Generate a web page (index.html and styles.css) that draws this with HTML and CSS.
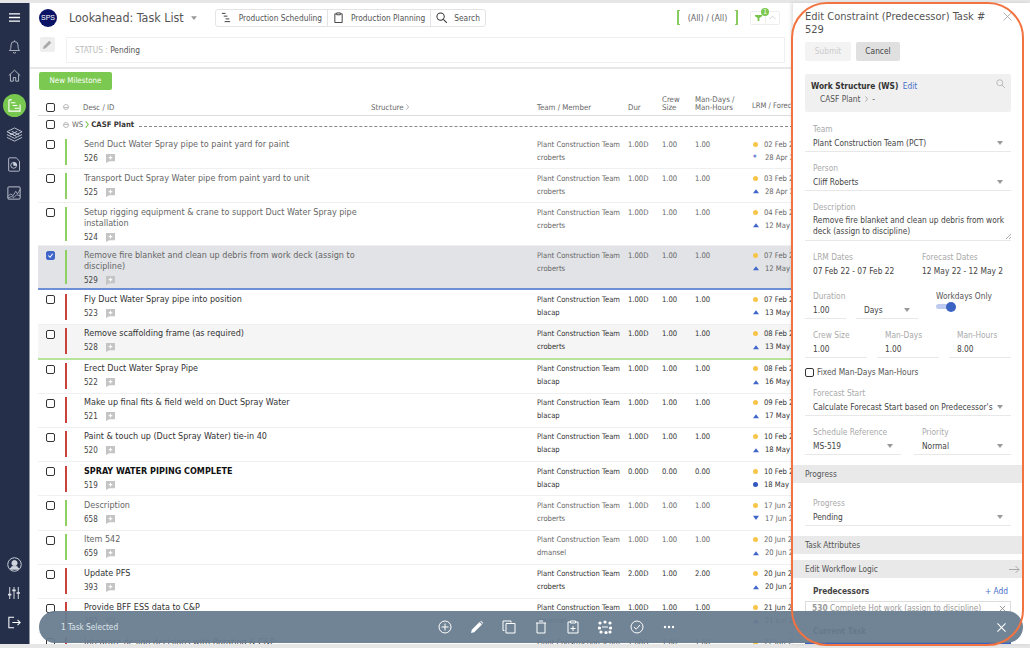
FILE: index.html
```html
<!DOCTYPE html>
<html lang="en">
<head>
  <meta charset="UTF-8">
  <title>Lookahead: Task List</title>
  <link rel="stylesheet" href="styles.css">
</head>
<body>
<svg class="defs" width="0" height="0">
  <symbol id="note" viewBox="0 0 10 10"><path d="M0 0h10v8H3.500L0 10z" fill="#c4c4c4"/><path d="M5 2v4M3 4h4" stroke="#fff" stroke-width="1.200"/></symbol>
  <symbol id="caret" viewBox="0 0 8 5"><path d="M0 0h8L4 5z" fill="#999"/></symbol>
  <symbol id="tri" viewBox="0 0 8 8"><path d="M4 1.500L8 7H0z" fill="#3f66c8"/></symbol>
</svg>
<div class="app">
  <nav class="sidebar">
    <svg class="nav-icon menu" viewBox="0 0 14 12" fill="none" stroke="#fff" stroke-width="1.400"><path d="M1 2h12M1 6h12M1 10h12"/></svg>
    <svg class="nav-icon bell" viewBox="0 0 16 18" fill="none" stroke="#cfd4de"><path d="M8 2a4.500 4.500 0 0 1 4.500 4.500c0 4 .5 5.500 2 7H1.500c1.500-1.500 2-3 2-7A4.500 4.500 0 0 1 8 2zM8 .5V2M6.500 15.500a1.500 1.500 0 0 0 3 0"/></svg>
    <svg class="nav-icon home" viewBox="0 0 16 16" fill="none" stroke="#cfd4de"><path d="M1 8l7-6.500L15 8M3 6.500V15h3.500v-4.500h3V15H13V6.500"/></svg>
    <span class="nav-active"><svg viewBox="0 0 14 14" fill="none" stroke="#fff" stroke-width="1.200"><path d="M1 1h3M1 1v12h12V6M3 4h5M5 7h5M7 10h5"/></svg></span>
    <svg class="nav-icon layers" viewBox="0 0 18 18" fill="none" stroke="#cfd4de" stroke-width=".9"><path d="M9 1l8 4-8 4-8-4zM1 8l8 4 8-4M1 11l8 4 8-4M3 6l8 4M6 4.500l8 4M12 4.500l-8 4"/></svg>
    <svg class="nav-icon doc" viewBox="0 0 16 18" fill="none" stroke="#cfd4de"><path d="M2 1h8l4 4v11a1 1 0 0 1-1 1H2a1 1 0 0 1-1-1V2a1 1 0 0 1 1-1z"/><circle cx="7" cy="10" r="3.500"/><path d="M7 10V6.500A3.500 3.500 0 0 1 10.500 10z" fill="#cfd4de"/></svg>
    <svg class="nav-icon chart" viewBox="0 0 16 16" fill="none" stroke="#cfd4de"><rect x="1" y="1" width="14" height="14" rx="1"/><path d="M1 12l3-3 3 2 3-5 2 3 3-5M1 14l4-2 3 1 3-3 4 1" stroke-width=".8"/></svg>
    <span class="nav-spacer"></span>
    <svg class="nav-icon user" viewBox="0 0 16 16" fill="none" stroke="#cfd4de"><circle cx="8" cy="8" r="7.200"/><circle cx="8" cy="6.500" r="2.800" fill="#cfd4de"/><path d="M3.500 13c.5-2.500 2-3 4.500-3s4 .5 4.500 3z" fill="#cfd4de"/></svg>
    <svg class="nav-icon sliders" viewBox="0 0 14 14" fill="none" stroke="#dfe2e8" stroke-width="1.100"><path d="M2 0v14M7 0v14M12 0v14"/><path d="M0 9h4M5 4h4M10 7h4" stroke-width="2"/></svg>
    <svg class="nav-icon logout" viewBox="0 0 15 14" fill="none" stroke="#fff" stroke-width="1.200"><path d="M7 1H1v12h6M5 7h9M11 4l3 3-3 3"/></svg>
  </nav>

  <main class="main">
    <header class="topbar">
      <span class="logo">SPS</span>
      <h1 class="page-title">Lookahead: Task List</h1>
      <svg class="title-caret"><use href="#caret"/></svg>
      <div class="btn-group">
        <span class="group-btn"><svg viewBox="0 0 12 12" fill="none" stroke="#333"><path d="M1 1.500h4M3 4.500h4M5 7.500h4M4 10.500h6"/></svg>Production Scheduling</span>
        <span class="group-btn"><svg viewBox="0 0 12 12" fill="none" stroke="#333"><path d="M3.500 2H2v9.500h8V2H8.500M4 1h4v2H4z"/></svg>Production Planning</span>
        <span class="group-btn"><svg viewBox="0 0 12 12" fill="none" stroke="#333" stroke-width="1.100"><circle cx="5" cy="5" r="4"/><path d="M8 8l4 4"/></svg>Search</span>
      </div>
      <div class="scope"><i class="bracket"></i>(All) / (All)<i class="bracket end"></i></div>
      <div class="filter">
        <span class="filter-part"><svg viewBox="0 0 8 8"><path d="M0 1h8v1.500L5 4.500V8H3V4.500L0 2.500z" fill="#75c34a"/></svg></span>
        <span class="filter-part"><svg viewBox="0 0 8 5" fill="none" stroke="#ccc"><path d="M.5 4.500L4 1l3.500 3.500"/></svg></span>
        <span class="badge">1</span>
      </div>
    </header>
    <div class="status-row">
      <span class="edit-btn"><svg viewBox="0 0 10 10"><path d="M0 10l.8-3L7 .8 9.200 3 3 9.200z" fill="#a8a8a8"/></svg></span>
      <div class="status-box"><span class="status-key">STATUS :</span> Pending</div>
    </div>
    <div class="action-row"><span class="btn-milestone">New Milestone</span></div>

    <div class="table">
      <div class="row head">
        <span class="check"></span>
        <span class="collapse"></span>
        <span class="desc">Desc / ID</span>
        <span class="structure">Structure <svg viewBox="0 0 4 8" fill="none" stroke="#999"><path d="M.5 .5L3.500 4 .5 7.500"/></svg></span>
        <span class="team">Team / Member</span>
        <span class="dur">Dur</span>
        <span class="crew">Crew<br>Size</span>
        <span class="man">Man-Days /<br>Man-Hours</span>
        <span class="dates">LRM / Forecast</span>
      </div>
      <div class="ws-row">
        <span class="check"></span>
        <span class="collapse"></span>
        <span class="ws-key">WS</span>
        <svg class="ws-arrow" viewBox="0 0 4 8" fill="none" stroke="#75c34a" stroke-width="1.200"><path d="M.5 .5L3.500 4 .5 7.500"/></svg>
        <b class="ws-name">CASF Plant</b>
        <span class="ws-line"></span>
      </div>

      <div class="row task soft">
        <span class="check"></span><span class="bar green"></span>
        <div class="desc"><div>Send Duct Water Spray pipe to paint yard for paint</div><div class="task-id">526 <svg class="note"><use href="#note"/></svg></div></div>
        <div class="team">Plant Construction Team<br>croberts</div><span class="dur">1.00D</span><span class="crew">1.00</span><span class="man">1.00</span>
        <div class="dates"><div><i class="dot"></i>02 Feb 22</div><div class="date-fc"><i class="star">*</i>28 Apr 22</div></div>
      </div>
      <div class="row task soft">
        <span class="check"></span><span class="bar green"></span>
        <div class="desc"><div>Transport Duct Spray Water pipe from paint yard to unit</div><div class="task-id">525 <svg class="note"><use href="#note"/></svg></div></div>
        <div class="team">Plant Construction Team<br>croberts</div><span class="dur">1.00D</span><span class="crew">1.00</span><span class="man">1.00</span>
        <div class="dates"><div><i class="dot"></i>03 Feb 22</div><div><svg class="tri"><use href="#tri"/></svg>28 Apr 22</div></div>
      </div>
      <div class="row task tall soft">
        <span class="check"></span><span class="bar green"></span>
        <div class="desc"><div>Setup rigging equipment &amp; crane to support Duct Water Spray pipe installation</div><div class="task-id">524 <svg class="note"><use href="#note"/></svg></div></div>
        <div class="team">Plant Construction Team<br>croberts</div><span class="dur">1.00D</span><span class="crew">1.00</span><span class="man">1.00</span>
        <div class="dates"><div><i class="dot"></i>04 Feb 22</div><div><svg class="tri"><use href="#tri"/></svg>12 May 22</div></div>
      </div>
      <div class="row task tall soft selected">
        <span class="check checked"><svg viewBox="0 0 8 8" fill="none" stroke="#fff" stroke-width="1.200"><path d="M1.500 4l2 2 3-4"/></svg></span><span class="bar green"></span>
        <div class="desc"><div>Remove fire blanket and clean up debris from work deck (assign to discipline)</div><div class="task-id">529 <svg class="note"><use href="#note"/></svg></div></div>
        <div class="team">Plant Construction Team<br>croberts</div><span class="dur">1.00D</span><span class="crew">1.00</span><span class="man">1.00</span>
        <div class="dates"><div><i class="dot"></i>07 Feb 22</div><div><svg class="tri"><use href="#tri"/></svg>12 May 22</div></div>
      </div>
      <div class="row task">
        <span class="check"></span><span class="bar red"></span>
        <div class="desc"><div>Fly Duct Water Spray pipe into position</div><div class="task-id">523 <svg class="note"><use href="#note"/></svg></div></div>
        <div class="team">Plant Construction Team<br>blacap</div><span class="dur">1.00D</span><span class="crew">1.00</span><span class="man">1.00</span>
        <div class="dates"><div><i class="dot"></i>07 Feb 22</div><div><svg class="tri"><use href="#tri"/></svg>13 May 22</div></div>
      </div>
      <div class="row task shaded">
        <span class="check"></span><span class="bar red"></span>
        <div class="desc"><div>Remove scaffolding frame (as required)</div><div class="task-id">528 <svg class="note"><use href="#note"/></svg></div></div>
        <div class="team">Plant Construction Team<br>croberts</div><span class="dur">1.00D</span><span class="crew">1.00</span><span class="man">1.00</span>
        <div class="dates"><div><i class="dot"></i>08 Feb 22</div><div><svg class="tri"><use href="#tri"/></svg>13 May 22</div></div>
      </div>
      <div class="row task">
        <span class="check"></span><span class="bar red"></span>
        <div class="desc"><div>Erect Duct Water Spray Pipe</div><div class="task-id">522 <svg class="note"><use href="#note"/></svg></div></div>
        <div class="team">Plant Construction Team<br>blacap</div><span class="dur">1.00D</span><span class="crew">1.00</span><span class="man">1.00</span>
        <div class="dates"><div><i class="dot"></i>08 Feb 22</div><div><svg class="tri"><use href="#tri"/></svg>16 May 22</div></div>
      </div>
      <div class="row task">
        <span class="check"></span><span class="bar red"></span>
        <div class="desc"><div>Make up final fits &amp; field weld on Duct Spray Water</div><div class="task-id">521 <svg class="note"><use href="#note"/></svg></div></div>
        <div class="team">Plant Construction Team<br>blacap</div><span class="dur">1.00D</span><span class="crew">1.00</span><span class="man">1.00</span>
        <div class="dates"><div><i class="dot"></i>09 Feb 22</div><div><svg class="tri"><use href="#tri"/></svg>17 May 22</div></div>
      </div>
      <div class="row task">
        <span class="check"></span><span class="bar red"></span>
        <div class="desc"><div>Paint &amp; touch up (Duct Spray Water) tie-in 40</div><div class="task-id">520 <svg class="note"><use href="#note"/></svg></div></div>
        <div class="team">Plant Construction Team<br>blacap</div><span class="dur">1.00D</span><span class="crew">1.00</span><span class="man">1.00</span>
        <div class="dates"><div><i class="dot"></i>10 Feb 22</div><div><svg class="tri"><use href="#tri"/></svg>18 May 22</div></div>
      </div>
      <div class="row task">
        <span class="check"></span><span class="bar red"></span>
        <div class="desc"><div class="milestone">SPRAY WATER PIPING COMPLETE</div><div class="task-id">519 <svg class="note"><use href="#note"/></svg></div></div>
        <div class="team">Plant Construction Team<br>blacap</div><span class="dur">0.00D</span><span class="crew">0.00</span><span class="man">0.00</span>
        <div class="dates"><div><i class="dot"></i>10 Feb 22</div><div><i class="dot blue"></i>18 May 22</div></div>
      </div>
      <div class="row task soft">
        <span class="check"></span><span class="bar green"></span>
        <div class="desc"><div>Description</div><div class="task-id">658 <svg class="note"><use href="#note"/></svg></div></div>
        <div class="team">Plant Construction Team<br>croberts</div><span class="dur">1.00D</span><span class="crew">1.00</span><span class="man">1.00</span>
        <div class="dates"><div><i class="dot"></i>17 Jun 22</div><div><svg class="tri flip"><use href="#tri"/></svg>17 Jun 22</div></div>
      </div>
      <div class="row task soft">
        <span class="check"></span><span class="bar green"></span>
        <div class="desc"><div>Item 542</div><div class="task-id">659 <svg class="note"><use href="#note"/></svg></div></div>
        <div class="team">Plant Construction Team<br>dmansel</div><span class="dur">1.00D</span><span class="crew">1.00</span><span class="man">1.00</span>
        <div class="dates"><div><i class="dot"></i>20 Jun 22</div><div><svg class="tri"><use href="#tri"/></svg>20 Jun 22</div></div>
      </div>
      <div class="row task">
        <span class="check"></span><span class="bar red"></span>
        <div class="desc"><div>Update PFS</div><div class="task-id">393 <svg class="note"><use href="#note"/></svg></div></div>
        <div class="team">Plant Construction Team<br>croberts</div><span class="dur">2.00D</span><span class="crew">1.00</span><span class="man">2.00</span>
        <div class="dates"><div><i class="dot"></i>20 Jun 22</div><div><svg class="tri"><use href="#tri"/></svg>20 Jun 22</div></div>
      </div>
      <div class="row task">
        <span class="check"></span><span class="bar red"></span>
        <div class="desc"><div>Provide BFF ESS data to C&amp;P</div><div class="task-id">392 <svg class="note"><use href="#note"/></svg></div></div>
        <div class="team">Plant Construction Team<br>dmansel</div><span class="dur">1.00D</span><span class="crew">1.00</span><span class="man">1.00</span>
        <div class="dates"><div><i class="dot"></i>21 Jun 22</div><div><svg class="tri"><use href="#tri"/></svg>21 Jun 22</div></div>
      </div>
      <div class="row task">
        <span class="check"></span><span class="bar red"></span>
        <div class="desc"><div>Integrate design decisions with Rotating &amp; C&amp;P</div></div>
        <div class="team">Plant Construction Team</div><span class="dur">1.00D</span><span class="crew">1.00</span><span class="man">1.00</span>
        <div class="dates"><div><i class="dot"></i>22 Jun 22</div></div>
      </div>
    </div>
  </main>

  <aside class="panel">
    <div class="panel-head">
      <h2 class="panel-title">Edit Constraint (Predecessor) Task # 529</h2>
      <svg class="panel-close" viewBox="0 0 10 10" fill="none" stroke="#aaa"><path d="M.5 .5l9 9M9.500 .5l-9 9"/></svg>
    </div>
    <div class="panel-btns">
      <span class="btn submit">Submit</span>
      <span class="btn cancel">Cancel</span>
    </div>
    <div class="ws-box">
      <div><b>Work Structure (WS)</b> <span class="link">Edit</span></div>
      <div class="ws-path">CASF Plant <svg viewBox="0 0 4 8" fill="none" stroke="#999"><path d="M.5 .5L3.500 4 .5 7.500"/></svg> -</div>
      <svg class="ws-search" viewBox="0 0 12 12" fill="none" stroke="#aaa"><circle cx="5" cy="5" r="4"/><path d="M8 8l4 4"/></svg>
    </div>

    <div class="field select"><label>Team</label><div class="value">Plant Construction Team (PCT)</div></div>
    <div class="field select"><label>Person</label><div class="value">Cliff Roberts</div></div>
    <div class="field"><label>Description</label><div class="value multi">Remove fire blanket and clean up debris from work deck (assign to discipline)</div>
      <svg class="grip" viewBox="0 0 5 5" fill="none" stroke="#888" stroke-width=".7"><path d="M0 5l5-5M3 5l2-2"/></svg>
    </div>
    <div class="cols plain">
      <div class="field"><label>LRM Dates</label><div class="value">07 Feb 22 - 07 Feb 22</div></div>
      <div class="field"><label>Forecast Dates</label><div class="value">12 May 22 - 12 May 2</div></div>
    </div>
    <div class="cols duration">
      <div class="field"><label>Duration</label><div class="value">1.00</div></div>
      <div class="field select"><label>&nbsp;</label><div class="value">Days</div></div>
      <div class="workdays"><span>Workdays Only</span><span class="toggle"></span></div>
    </div>
    <div class="cols three">
      <div class="field"><label>Crew Size</label><div class="value">1.00</div></div>
      <div class="field"><label>Man-Days</label><div class="value">1.00</div></div>
      <div class="field"><label>Man-Hours</label><div class="value">8.00</div></div>
    </div>
    <div class="fixed-row"><span class="check"></span>Fixed Man-Days Man-Hours</div>
    <div class="field select"><label>Forecast Start</label><div class="value">Calculate Forecast Start based on Predecessor's</div></div>
    <div class="cols two">
      <div class="field select"><label>Schedule Reference</label><div class="value">MS-519</div></div>
      <div class="field select"><label>Priority</label><div class="value">Normal</div></div>
    </div>

    <div class="section">Progress</div>
    <div class="field select first"><label>Progress</label><div class="value">Pending</div></div>
    <div class="section">Task Attributes</div>
    <div class="section next">Edit Workflow Logic
      <svg viewBox="0 0 11 9" fill="none" stroke="#aaa"><path d="M0 4.500h10M6.500 1L10 4.500 6.500 8"/></svg>
    </div>
    <div class="pred-head"><b>Predecessors</b><span class="link">+ Add</span></div>
    <div class="pred-box"><span><b>530</b> Complete Hot work (assign to discipline)</span><svg viewBox="0 0 8 8" fill="none" stroke="#888"><path d="M1 1l6 6M7 1L1 7"/></svg></div>
    <div class="current"><b>Current Task</b></div>
    <div class="current-btn"></div>
  </aside>

  <div class="selection-bar">
    <span class="selection-text">1 Task Selected</span>
    <div class="selection-actions">
      <svg viewBox="0 0 14 14" fill="none" stroke="#fff"><circle cx="7" cy="7" r="6"/><path d="M7 3.500v7M3.500 7h7"/></svg>
      <svg viewBox="0 0 14 14" fill="#fff"><path d="M1 13l.8-3.200L9.500 2l2.500 2.500-7.800 7.700zM10.300 1.300l.7-.5 2.200 2.200-.5.700z"/></svg>
      <svg viewBox="0 0 14 14" fill="none" stroke="#fff"><path d="M2.500 10.500H1V1h8v1.500M4 3.500h9V13H4z"/></svg>
      <svg viewBox="0 0 14 14" fill="none" stroke="#fff"><path d="M2 3h10M3 3v10h8V3M5 1h4"/></svg>
      <svg viewBox="0 0 14 14" fill="none" stroke="#fff"><path d="M4 2H2v11h10V2h-2M4.500 1h5v2h-5zM7 6v5M4.500 8.500h5"/></svg>
      <svg viewBox="0 0 14 14" fill="#fff"><circle cx="2" cy="3" r="1.600"/><circle cx="7" cy="2" r="1.600"/><circle cx="12" cy="3" r="1.600"/><circle cx="1.500" cy="8" r="1.600"/><circle cx="12.500" cy="8" r="1.600"/><circle cx="3" cy="12" r="1.600"/><circle cx="8" cy="12.500" r="1.600"/><circle cx="12" cy="12" r="1.600"/><path d="M4 6.500h6v1H4z"/></svg>
      <svg viewBox="0 0 14 14" fill="none" stroke="#fff"><circle cx="7" cy="7" r="6"/><path d="M4 7l2.200 2.200L10 5"/></svg>
      <svg viewBox="0 0 14 14" fill="#fff"><circle cx="3" cy="7" r="1.200"/><circle cx="7" cy="7" r="1.200"/><circle cx="11" cy="7" r="1.200"/></svg>
    </div>
    <svg class="selection-close" viewBox="0 0 10 10" fill="none" stroke="#fff" stroke-width="1.200"><path d="M.5 .5l9 9M9.500 .5l-9 9"/></svg>
  </div>
  <div class="callout"></div>
</div>
</body>
</html>
```

FILE: styles.css
```css
* {
  box-sizing: border-box;
}
html, body {
  margin: 0;
  height: 648px;
  overflow: hidden;
}
body {
  padding-top: 3px;
  background: #e6e6e6;
  font-family: "DejaVu Sans", sans-serif;
  font-stretch: condensed;
  font-size: 8.3px;
  color: #444;
}
b {
  font-weight: bold;
}
.defs {
  position: absolute;
}
.app {
  position: relative;
  display: flex;
  height: 641px;
  background: #fff;
}

/* left nav */
.sidebar {
  flex: 0 0 30px;
  display: flex;
  flex-direction: column;
  align-items: center;
  width: 30px;
  padding-top: 9px;
  padding-right: 1px;
  padding-bottom: 15px;
  background: #252f4a;
  border-right: 1px solid #8d97a8;
}
.nav-icon {
  display: block;
  width: 13px;
  height: 13px;
}
.menu {
  height: 11px;
}
.bell {
  margin-top: 17px;
  height: 14px;
}
.home {
  margin-top: 15px;
}
.nav-active {
  display: flex;
  align-items: center;
  justify-content: center;
  width: 23px;
  height: 23px;
  margin-top: 12px;
  border-radius: 50%;
  background: #78c850;
}
.nav-active svg {
  width: 13px;
  height: 13px;
}
.layers {
  width: 17px;
  height: 17px;
  margin-top: 10px;
}
.doc {
  width: 15px;
  height: 15px;
  margin-top: 13px;
}
.chart {
  width: 14px;
  height: 14px;
  margin-top: 14px;
}
.nav-spacer {
  flex: 1;
}
.user {
  width: 15px;
  height: 15px;
}
.sliders {
  width: 12px;
  height: 12px;
  margin-top: 15px;
}
.logout {
  margin-top: 17px;
}

/* main column */
.main {
  flex: 1;
  min-width: 0;
  overflow: hidden;
}
.topbar {
  display: flex;
  align-items: center;
  height: 29px;
  padding: 0 13px 0 9px;
  white-space: nowrap;
}
.logo {
  display: flex;
  align-items: center;
  justify-content: center;
  width: 18px;
  height: 18px;
  border-radius: 50%;
  background: #0b1464;
  color: #fff;
  font-family: "Liberation Sans", sans-serif;
  font-size: 7px;
}
.page-title {
  margin: 0 0 0 12px;
  font-size: 12.4px;
  font-weight: normal;
  color: #555;
}
.title-caret {
  width: 6px;
  height: 4px;
  margin-left: 7px;
}
.btn-group {
  display: flex;
  height: 18px;
  margin-left: 18px;
  border: 1px solid #e4e4e4;
  border-radius: 3px;
}
.group-btn {
  display: flex;
  align-items: center;
  gap: 7px;
  padding: 0 5px;
  color: #555;
  border-left: 1px solid #e4e4e4;
}
.group-btn:first-child {
  border-left: 0;
}
.group-btn svg {
  width: 11px;
  height: 11px;
}
.scope {
  display: flex;
  align-items: center;
  justify-content: space-between;
  width: 61px;
  height: 15px;
  margin-left: auto;
  font-size: 8.8px;
  color: #666;
}
.bracket {
  width: 3px;
  height: 15px;
  border: 1px solid #8acb60;
  border-right: 0;
  border-left-width: 2px;
}
.bracket.end {
  border: 1px solid #8acb60;
  border-left: 0;
  border-right-width: 2px;
}
.filter {
  position: relative;
  display: flex;
  height: 14px;
  margin-left: 12px;
  border: 1px solid #eee;
  border-radius: 2px;
}
.filter-part {
  display: flex;
  align-items: center;
  justify-content: center;
  width: 14px;
}
.filter-part + .filter-part {
  border-left: 1px solid #eee;
}
.filter-part svg {
  width: 7px;
  height: 7px;
}
.badge {
  position: absolute;
  left: 10px;
  top: -4px;
  width: 8px;
  height: 8px;
  border-radius: 50%;
  background: #7cc952;
  color: #fff;
  font-size: 6.5px;
  line-height: 8px;
  text-align: center;
}
.status-row {
  display: flex;
  height: 37px;
  padding: 5px 8px 0 10px;
  border-bottom: 2px solid #e8e8e8;
}
.edit-btn {
  display: flex;
  align-items: center;
  justify-content: center;
  width: 15px;
  height: 15px;
  border-radius: 2px;
  background: #eee;
}
.edit-btn svg {
  width: 9px;
  height: 9px;
}
.status-box {
  flex: 1;
  height: 26px;
  margin-left: 11px;
  padding-left: 8px;
  border: 1px solid #f0f0f0;
  line-height: 25px;
  color: #555;
}
.status-key {
  color: #bbb;
}
.action-row {
  height: 23px;
  padding: 3px 0 0 9px;
}
.btn-milestone {
  display: block;
  width: 73px;
  height: 18px;
  border-radius: 2px;
  background: #7cc952;
  color: #fff;
  font-size: 7.9px;
  line-height: 18px;
  text-align: center;
}

/* task table */
.table {
  margin-left: 8px;
  width: 755px;
}
.row {
  display: grid;
  grid-template-columns: 8px 19px 19px 287px 166px 91px 34px 33px 57px 60px;
  white-space: nowrap;
}
.row > .check {
  grid-column: 2;
}
.row > .bar,
.row > .collapse {
  grid-column: 3;
}
.row > .desc {
  grid-column: 4 / span 2;
}
.row > .structure {
  grid-column: 5;
}
.row > .team {
  grid-column: 6;
}
.row > .dur {
  grid-column: 7;
}
.row > .crew {
  grid-column: 8;
}
.row > .man {
  grid-column: 9;
}
.row > .dates {
  grid-column: 10;
}
.check {
  display: block;
  width: 9px;
  height: 9px;
  border: 1.500px solid #333;
  border-radius: 2px;
  background: #fff;
}
.check.checked {
  display: flex;
  border-color: #3f66c8;
  background: #3f66c8;
}
.head {
  align-items: end;
  height: 24px;
  padding-bottom: 3px;
  border-bottom: 1px solid #ddd;
  font-size: 7.8px;
  line-height: 8px;
  color: #666;
}
.head .check {
  margin-bottom: 0;
}
.head > .desc {
  grid-column: 4;
  margin-left: -1px;
}
.structure svg {
  width: 3px;
  height: 6px;
}
.collapse {
  display: block;
  width: 6px;
  height: 6px;
  border: 1px solid #bbb;
  border-radius: 50%;
  background: linear-gradient(#bbb, #bbb) center / 4px 1px no-repeat;
}
.head .collapse {
  margin: 0 0 2px -2px;
}
.ws-row {
  display: flex;
  align-items: center;
  height: 19px;
  padding-left: 8px;
  padding-bottom: 2px;
  font-size: 7.7px;
  color: #666;
}
.ws-row .collapse {
  margin-left: 8px;
}
.ws-key {
  margin-left: 3px;
}
.ws-arrow {
  width: 4px;
  height: 7px;
  margin: 0 2px 0 2px;
}
.ws-name {
  color: #333;
}
.ws-line {
  flex: 1;
  margin: 3px 0 0 5px;
  border-top: 1px dashed #888;
}
.task {
  height: 34.2px;
  border-bottom: 1px solid #f0f0f0;
  padding-top: 3.5px;
  color: #333;
}
.task.soft {
  color: #666;
}
.tall {
  height: 43px;
}
.selected {
  height: 44px;
  background: #e1e3e6;
  border-bottom: 2px solid #6d8fd6;
}
.shaded {
  height: 35px;
  background: #f5f5f5;
  border-bottom: 2px solid #b8e39a;
}
.task .check {
  margin-top: 1.5px;
}
.bar {
  display: block;
  width: 2px;
  height: 26px;
}
.tall .bar {
  height: 34px;
}
.green {
  background: #8ed063;
}
.red {
  background: #c9423c;
}
.task .desc {
  width: 285px;
  white-space: normal;
  font-size: 8.97px;
  line-height: 11px;
}
.milestone {
  font-weight: bold;
  color: #111;
}
.task-id {
  display: flex;
  align-items: center;
  gap: 8px;
  height: 13px;
  margin-top: 2px;
  font-size: 8px;
  color: #444;
}
.note {
  width: 9px;
  height: 9px;
}
.task .team,
.task .dur,
.task .crew,
.task .man,
.dates {
  font-size: 7.6px;
  line-height: 13px;
}
.task .dur,
.task .crew,
.task .man,
.task .team,
.task .dates {
  margin-top: -1px;
}
.dates div {
  display: flex;
  align-items: center;
  gap: 6px;
  overflow: hidden;
}
.dot {
  flex: none;
  width: 5px;
  height: 5px;
  margin-left: 1px;
  border-radius: 50%;
  background: #f8c548;
}
.dot.blue {
  background: #3158c0;
}
.tri {
  flex: none;
  width: 6px;
  height: 6px;
  margin-left: 1px;
}
.tri.flip {
  transform: rotate(180deg);
}
.star {
  flex: none;
  width: 6px;
  margin-left: 1px;
  font-style: normal;
  font-weight: bold;
  color: #3f66c8;
}

/* edit panel */
.panel {
  position: relative;
  flex: 0 0 237px;
  width: 237px;
  height: 641px;
  overflow: hidden;
  padding: 7px 19px 0 12px;
  background: #fff;
  box-shadow: -2px 0 3px rgba(0, 0, 0, .12);
  color: #444;
}
.panel-head {
  display: flex;
  justify-content: space-between;
}
.panel-title {
  width: 190px;
  margin: 0;
  font-size: 11px;
  font-weight: normal;
  line-height: 13px;
  color: #555;
}
.panel-close {
  width: 9px;
  height: 9px;
  margin-top: 2px;
  margin-right: -1px;
}
.panel-btns {
  display: flex;
  gap: 5px;
  margin-top: 6px;
}
.btn {
  height: 19px;
  border-radius: 2px;
  line-height: 19px;
  text-align: center;
}
.submit {
  width: 46px;
  background: #f3f3f3;
  color: #ccc;
}
.cancel {
  width: 44px;
  background: #e0e0e0;
  color: #444;
}
.ws-box {
  position: relative;
  height: 38px;
  margin: 13px 0 11px;
  padding: 6px 6px 0;
  border-radius: 2px;
  background: #f0f0f0;
  line-height: 13px;
}
.ws-box b {
  color: #333;
}
.link {
  margin-left: 2px;
  color: #4a6fc9;
}
.ws-path {
  padding-left: 9px;
  color: #555;
}
.ws-path svg {
  width: 3px;
  height: 6px;
  margin: 0 2px;
}
.ws-search {
  position: absolute;
  right: 6px;
  top: 5px;
  width: 9px;
  height: 9px;
}
.field {
  position: relative;
  margin-bottom: 10px;
  border-bottom: 1px solid #e8e8e8;
}
.field label {
  display: block;
  padding-left: 8px;
  line-height: 12.5px;
  color: #aaa;
}
.value {
  height: 15.5px;
  padding: 0 0 1.5px 8px;
  line-height: 14px;
  white-space: nowrap;
  overflow: hidden;
  color: #444;
}
.value.multi {
  height: 26.5px;
  padding-top: 1px;
  line-height: 11.5px;
  white-space: normal;
}
.grip {
  position: absolute;
  right: 0;
  bottom: 1px;
  width: 5px;
  height: 5px;
}
.select::after {
  content: "";
  position: absolute;
  right: 8px;
  top: 18px;
  border: 3px solid transparent;
  border-top: 4px solid #999;
  border-bottom: 0;
}
.cols {
  display: grid;
  column-gap: 10px;
}
.plain {
  grid-template-columns: 100px 1fr;
  column-gap: 9px;
}
.plain .field {
  margin-bottom: 11px;
  border-bottom: 0;
}
.duration {
  grid-template-columns: 41px 62px 1fr;
  column-gap: 10px;
}
.workdays {
  padding-left: 8px;
  line-height: 12px;
  color: #555;
}
.workdays span {
  display: block;
}
.toggle {
  position: relative;
  width: 15px;
  height: 5px;
  margin-top: 2px;
  border-radius: 3px;
  background: #bccbef;
}
.toggle::after {
  content: "";
  position: absolute;
  right: -5px;
  top: -2.5px;
  width: 10px;
  height: 10px;
  border-radius: 50%;
  background: #3b63c4;
}
.three {
  grid-template-columns: 1fr 1fr 1fr;
  margin-bottom: -2px;
}
.fixed-row {
  display: flex;
  align-items: center;
  gap: 3px;
  height: 12px;
  margin-bottom: 9px;
  color: #555;
}
.fixed-row .check {
  border-width: 1px;
}
.two {
  grid-template-columns: 96px 97px;
  column-gap: 13px;
}
.section {
  display: flex;
  align-items: center;
  justify-content: space-between;
  width: 230px;
  height: 18px;
  margin-left: -12px;
  padding: 0 3px 0 12px;
  background: #e9e9e9;
  color: #555;
}
.section svg {
  width: 11px;
  height: 9px;
}
.section.next {
  margin-top: 6px;
}
.field.first {
  margin-top: 14px;
}
.pred-head {
  display: flex;
  justify-content: space-between;
  margin-top: 7px;
  padding: 0 3px 0 8px;
  line-height: 12px;
}
.pred-box {
  display: flex;
  justify-content: space-between;
  align-items: center;
  height: 14px;
  margin-top: 4px;
  padding: 0 4px 0 6px;
  border: 1px solid #ddd;
  color: #999;
}
.pred-box svg {
  width: 7px;
  height: 7px;
}
.current {
  margin-top: 11px;
  padding-left: 8px;
  color: #333;
}
.current-btn {
  height: 12px;
  margin-top: 6px;
  background: #3b63c4;
}

/* floating selection bar */
.selection-bar {
  position: absolute;
  left: 39px;
  right: 7px;
  top: 608px;
  display: flex;
  align-items: center;
  height: 32px;
  padding: 0 17px 0 22px;
  border-radius: 16px;
  background: rgba(104, 124, 143, .94);
  color: #dfe4ea;
  font-size: 8.2px;
}
.selection-text {
  width: 377px;
}
.selection-actions {
  display: flex;
  gap: 18px;
}
.selection-actions svg {
  width: 14px;
  height: 14px;
}
.selection-close {
  width: 9px;
  height: 9px;
  margin-left: auto;
}

/* orange annotation drawn over the panel */
.callout {
  position: absolute;
  left: 791px;
  top: -1px;
  width: 233px;
  height: 644px;
  border: 2.5px solid #f27240;
  border-radius: 36px;
  pointer-events: none;
}
```
